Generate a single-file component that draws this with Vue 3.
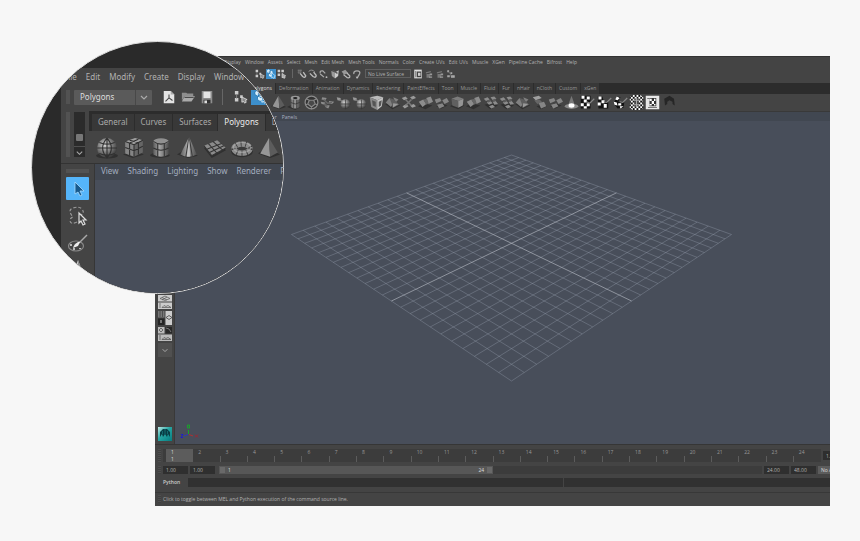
<script setup>
const menus = ['Display', 'Window', 'Assets', 'Select', 'Mesh', 'Edit Mesh', 'Mesh Tools', 'Normals', 'Color', 'Create UVs', 'Edit UVs', 'Muscle', 'XGen', 'Pipeline Cache', 'Bifrost', 'Help']
const snapIcons = ['magnet-grid', 'magnet-curve', 'magnet-point', 'magnet-cube', 'magnet-plane', 'magnet-live']
const renderIcons = ['clap', 'gear-box', 'gear-box', 'nodes']
const tabs = ['Polygons', 'Deformation', 'Animation', 'Dynamics', 'Rendering', 'PaintEffects', 'Toon', 'Muscle', 'Fluid', 'Fur', 'nHair', 'nCloth', 'Custom', 'xGen']
const shelf = ['pyramid', 'pipe', 'soccer', 'helix', 'bool', 'bool', 'glass-cube', 'facets', 'split', 'bridge', 'pieces', 'solid', 'bridge', 'mosaic', 'mosaic', 'facets', 'extrude', 'pieces', 'spot', 'check-a', 'check-b', 'check-c', 'check-full', 'check-box', 'hat']
const layouts = ['lay-two', 'lay-four', 'lay-three']
const frames = Array.from({ length: 24 }, (_, i) => i + 1)

const lensMenus = ['File', 'Edit', 'Modify', 'Create', 'Display', 'Window']
const lensTabs = ['General', 'Curves', 'Surfaces', 'Polygons', 'Deformation']
const lensShelf = ['sphere', 'cube', 'cylinder', 'cone', 'plane', 'torus', 'pyramid']
const lensPanel = ['View', 'Shading', 'Lighting', 'Show', 'Renderer', 'Panels']

// Ground plane in perspective: u and v run 0..1 from the far corner.
const N = 24
const AXIS = 13
function project(u, v) {
  const w = 1 - 0.2287 * (u + v)
  const x = 336.5 + (169.7 * (u - v)) / w
  const y = (155 + 25.87 * (u + v)) / w - 121
  return x.toFixed(1) + ' ' + y.toFixed(1)
}
const line = (i) => `M${project(i / N, 0)}L${project(i / N, 1)}M${project(0, i / N)}L${project(1, i / N)}`
const gridPath = Array.from({ length: N + 1 }, (_, i) => (i === AXIS ? '' : line(i))).join('')
const axisPath = line(AXIS)
</script>

<template>
  <main class="page">
    <svg class="defs" aria-hidden="true">
      <defs>
        <linearGradient id="metal" x1="0" x2="1"><stop offset="0" stop-color="#5c5c5c" /><stop offset=".4" stop-color="#a4a4a4" /><stop offset="1" stop-color="#4c4c4c" /></linearGradient>
        <radialGradient id="ball" cx=".4" cy=".35" r=".65"><stop offset="0" stop-color="#d6d6d6" /><stop offset=".5" stop-color="#858585" /><stop offset="1" stop-color="#3c3c3c" /></radialGradient>
        <linearGradient id="teal" x1="0" y1="0" x2="1" y2="1"><stop offset="0" stop-color="#bfe9e6" /><stop offset=".45" stop-color="#25a5a2" /><stop offset="1" stop-color="#067c80" /></linearGradient>
        <pattern id="check" width="5" height="5" patternUnits="userSpaceOnUse"><path fill="#111" d="M0 0h5v5H0z" /><path fill="#fff" d="M0 0h2.500v2.500H0zM2.500 2.500H5V5H2.500z" /></pattern>
      </defs>
      <symbol id="sphere" viewBox="0 0 20 20"><ellipse cx="10" cy="17" rx="10" ry="2.500" fill="#303030" /><circle cx="10" cy="10" r="9" fill="url(#ball)" /><path d="M10 1v18M1 10h18M3 5q7 3 14 0M3 15q7 3 14 0M10 1Q2 10 10 19M10 1q8 9 0 18" fill="none" stroke="#303030" /></symbol>
      <symbol id="cube" viewBox="0 0 20 20"><path fill="#303030" d="M0 16l9 3 10-3-9-4z" /><path fill="#a0a0a0" d="M2 4l9-3 7 2-8 4z" /><path fill="#858585" d="M2 4l8 3v11l-8-3z" /><path fill="#666" d="M10 7l8-4v11l-8 4z" /><path d="M6 5.500v11M14 5v11M2 9.500l8 3 8-4M6 3l8 2M6 5.500l8-3.500M2 4l8 3 8-4M10 7v11" fill="none" stroke="#303030" /></symbol>
      <symbol id="cylinder" viewBox="0 0 20 20"><ellipse cx="9" cy="16.500" rx="9" ry="2.500" fill="#303030" /><path fill="url(#metal)" d="M3 4v12q7 4 14 0V4z" /><ellipse cx="10" cy="4" rx="7" ry="2.800" fill="#909090" /><path d="M3 4q7 5 14 0M3 10q7 4 14 0M7 6v12M13 6v12" fill="none" stroke="#343434" /></symbol>
      <symbol id="cone" viewBox="0 0 20 20"><path fill="#303030" d="M0 16l8-5 11 6-9 2z" /><path fill="url(#metal)" d="M11 0L3 16q7 4 15 0z" /><path d="M11 0L8 18M11 0l3 18" fill="none" stroke="#3c3c3c" /><path fill="#ddd" d="M11 0L9 18h3z" opacity=".6" /></symbol>
      <symbol id="plane" viewBox="0 0 20 20"><path fill="#303030" d="M0 10l7 9 13-7-1-1z" /><path fill="#8a8a8a" d="M0 8l12-5 8 7-13 7z" /><path d="M3 11l13-5M5 14l13-6M4 6l8 9M8 4l9 8M0 8l7 9 13-7" fill="none" stroke="#333" /></symbol>
      <symbol id="torus" viewBox="0 0 20 20"><ellipse cx="10" cy="13" rx="10" ry="5.500" fill="#303030" /><ellipse cx="10" cy="10.500" rx="7.200" ry="4.200" fill="#3a3a3a" stroke="#8c8c8c" stroke-width="5" /><ellipse cx="10" cy="10.500" rx="7.200" ry="4.200" fill="none" stroke="#3b3b3b" stroke-width="5" stroke-dasharray=".8 3.500" /><ellipse cx="10" cy="9.500" rx="8" ry="4.500" fill="none" stroke="#ccc" opacity=".4" /></symbol>
      <symbol id="pyramid" viewBox="0 0 20 20"><path fill="#303030" d="M0 15l8-6 12 7-9 3z" /><path fill="#969696" d="M10 1L2 15l9 3z" /><path fill="#5c5c5c" d="M10 1l8 13-7 4z" /></symbol>
      <symbol id="pipe" viewBox="0 0 20 20"><path fill="#303030" d="M0 16l8-4 10 4-7 4z" /><path fill="url(#metal)" d="M5 4v12q6 4 12 0V4z" /><ellipse cx="11" cy="4" rx="6" ry="3" fill="#999" /><ellipse cx="11" cy="4" rx="3" ry="1.500" fill="#222" /><path d="M5 10q6 4 12 0M9 6v12M13 6v12" fill="none" stroke="#333" /></symbol>
      <symbol id="soccer" viewBox="0 0 20 20"><circle cx="10" cy="10" r="8.500" fill="#333" stroke="#8c8c8c" stroke-width="1.600" /><path d="M7 7h6l2 5-5 4-5-4zM7 7L3 5M13 7l4-2M15 12l3 1M5 12l-3 1M10 16v3" fill="#484848" stroke="#888" stroke-width="1.600" /></symbol>
      <symbol id="helix" viewBox="0 0 20 20"><path fill="#8d8d8d" d="M3 3l6 1-2 3-5-1zM1 9l6 1v3l-5-1zM8 13l5 1-2 4-4-2zM12 8l7 1-3 3-4-1z" /><path d="M5 6l5 5 6-1M5 12l5 3" fill="none" stroke="#666" stroke-width="2" /></symbol>
      <symbol id="bool" viewBox="0 0 20 20"><path fill="#999" d="M1 3l5 1 1 4-5-1z" /><path d="M5 6l4 3" stroke="#777" stroke-width="2" /><circle cx="12.500" cy="12" r="6.500" fill="url(#ball)" /><path d="M6 12h13M12.500 6v13" stroke="#333" fill="none" /></symbol>
      <symbol id="glass-cube" viewBox="0 0 20 20"><path fill="#bbb" d="M1 3l10-2 8 2-8 4z" /><path fill="#8a8a8a" d="M1 3l10 4v13L3 16z" /><path fill="#c4c4c4" d="M11 7l8-4-2 12-6 5z" /><path fill="#555" d="M4 7l5 2v7l-4-2zM13 9l4-2-1 7-3 2z" /></symbol>
      <symbol id="facets" viewBox="0 0 20 20"><path fill="#303030" d="M0 12l10 7 10-5-5-4z" /><path fill="#808080" d="M1 10l5-6 5 7-3 5zM11 3l7 3-4 4z" /><path fill="#5e5e5e" d="M6 4l6 2 7 7-8 4z" /><path fill="#999" d="M11 11l7 1-8 5z" /></symbol>
      <symbol id="split" viewBox="0 0 20 20"><path fill="#9a9a9a" d="M1 4l5-2 3 3-5 2zM12 3l5-2 3 3-5 2zM2 15l5-3 3 3-5 3zM12 14l5-2 3 3-5 2z" /><path d="M6 6l8 8M14 6l-8 8" stroke="#777" stroke-width="2" /></symbol>
      <symbol id="bridge" viewBox="0 0 20 20"><path fill="#303030" d="M0 15l7-4 12 3-9 5z" /><path fill="#8c8c8c" d="M1 9l6-3 4 6-5 4zM11 4l6-2 3 7-6 3z" /><path fill="#666" d="M7 6l5-1 2 6-3 2z" /></symbol>
      <symbol id="pieces" viewBox="0 0 20 20"><path fill="#303030" d="M3 15l6-4 9 3-8 4z" /><path fill="#858585" d="M1 6l7-2 2 4-7 3zM11 7l6-3 3 5-6 3zM4 13l7-2 3 4-7 3z" /></symbol>
      <symbol id="solid" viewBox="0 0 20 20"><path fill="#303030" d="M0 15l8-5 11 4-8 5z" /><path fill="#7c7c7c" d="M2 5l8-3 8 3-7 3z" /><path fill="#606060" d="M2 5l9 3v9l-8-3z" /><path fill="#959595" d="M11 8l7-3-1 9-6 3z" /></symbol>
      <symbol id="mosaic" viewBox="0 0 20 20"><path fill="#303030" d="M2 13l8 6 10-5-8-4z" /><path fill="#8c8c8c" d="M1 5l5-2 3 3-5 2zM10 3l5-1 3 3-5 2zM5 10l5-2 3 3-5 2zM13 9l4-1 3 4-5 1zM8 15l5-2 3 3-5 2z" /><path fill="#5c5c5c" d="M5 8l4-2 2 2-4 2zM13 6l4-1v3l-4 1z" /></symbol>
      <symbol id="extrude" viewBox="0 0 20 20"><path fill="#303030" d="M6 15l8-3 6 3-8 4z" /><path fill="#a0a0a0" d="M1 3l8-2 4 3-8 3z" /><path fill="#666" d="M3 7l7-1 4 4-7 2z" /><path fill="#858585" d="M9 11l7-2 3 6-7 3z" /></symbol>
      <symbol id="spot" viewBox="0 0 20 20"><ellipse cx="10" cy="15" rx="9" ry="3.500" fill="#8a8a8a" /><path fill="#777" d="M10 1L5 15h10z" /><ellipse cx="10" cy="14" rx="4" ry="3" fill="#fff" /></symbol>
      <symbol id="check-a" viewBox="0 0 20 20"><path fill="#111" d="M1 1h13v17H1z" /><path fill="#fff" d="M2 1h4v4H2zM9 2h4v4H9zM5 6h4v4H5zM1 11h4v4H1zM9 11h4v4H9zM5 15h4v3H5z" /><path d="M9 9l4 2 6-6" fill="none" stroke="#888" stroke-width="1.500" /></symbol>
      <symbol id="check-b" viewBox="0 0 20 20"><path fill="#111" d="M1 2h6l2 6 6 2v8H2z" /><path fill="#fff" d="M2 2h4v4H2zM1 10h4v4H1zM6 7h4v4H6zM9 12h4v5H9z" /><path d="M9 9l4 1 6-6" fill="none" stroke="#888" stroke-width="1.500" /></symbol>
      <symbol id="check-c" viewBox="0 0 20 20"><path fill="#111" d="M5 2l5 1-3 6 8 1-1 7-8 1-5-7z" /><path fill="#fff" d="M5 2l4 2-3 3-3-1zM1 9l4 1 1 4-4-1zM7 11h4v3H7zM9 15h5l-4 3z" /><path d="M9 9l4 1 6-6" fill="none" stroke="#888" stroke-width="1.500" /></symbol>
      <symbol id="check-full" viewBox="0 0 20 20"><path fill="url(#check)" d="M1 3l4-3h10l4 3v4l-2 3 2 3v4l-4 3H5l-4-3v-4l2-3-2-3z" /><path fill="#444" d="M7 5h6v10H7z" /><path d="M10 3v14M5 7h10M5 13h10" stroke="#aaa" stroke-width="1.500" /></symbol>
      <symbol id="check-box" viewBox="0 0 20 20"><path fill="#e8e8e8" d="M1 1h18v18H1z" /><path fill="#555" d="M4 16h12v1H4zM3 4h3v1H3z" /><path fill="#333" d="M6 4h9v11H6z" /><path fill="#fff" d="M6 5h3v3H6zM12 5h2v3h-2zM9 8h3v4H9zM6 12h3v2H6zM12 12h2v2h-2z" /></symbol>
      <symbol id="hat" viewBox="0 0 20 20"><path fill="#262626" d="M3 5l7-4 6 4 1 9-3-2v-3l-4-2-3 2v3l-3 2z" /></symbol>
      <symbol id="new" viewBox="0 0 16 16"><path fill="#e4e4e4" d="M2 1h8l4 4v10H2z" /><path fill="#aaa" d="M10 1l4 4h-4z" /><path d="M8 5v4l-4 4M8 9l4 3" fill="none" stroke="#444" stroke-width="1.200" /></symbol>
      <symbol id="open" viewBox="0 0 16 16"><path fill="#8e8e8e" d="M1 3h5l1 1h7v3H4l-3 5z" /><path fill="#aaa" d="M4 7h12l-4 6H1z" /><path fill="#4a4a4a" d="M4 8h11l-1 1H4z" /></symbol>
      <symbol id="save" viewBox="0 0 16 16"><path fill="#8e8e8e" d="M2 1h12v14H2z" /><path fill="#e6e6e6" d="M4 2h8v7H4z" /><path fill="#333" d="M4 11h8v4H4z" /><path fill="#ddd" d="M5 12h3v3H5z" /></symbol>
      <symbol id="hier" viewBox="0 0 16 16"><path fill="#ccc" d="M1 1h4v4H1zM1 9h4v4H1zM7 6h3v3H7z" /><path d="M3 5v5" stroke="#888" /><path fill="#888" stroke="#ddd" d="M9 8v6l2-1 1 2 2-1-1-2 2-1z" /></symbol>
      <symbol id="object" viewBox="0 0 16 16"><path fill="#d8f0ff" stroke="#176aa6" stroke-width=".8" d="M1 2l3-2 3 2v3L4 7 1 5zM5 4l3-2 3 2v3L8 9 5 7zM4 8l3-2 3 2v3l-3 2-3-2z" /><path fill="#2b95dc" stroke="#e6f6ff" d="M9 6v8l2-1 1 2 2-1-1-2 2-1z" /></symbol>
      <symbol id="component" viewBox="0 0 16 16"><path fill="#ccc" d="M1 1h4v4H1zM7 1h4v4H7zM1 7h4v4H1z" /><path fill="#aaa" stroke="#ddd" d="M8 7v7l2-1 1 2 2-1-1-2 2-1z" /></symbol>
      <symbol id="magnet-grid" viewBox="0 0 16 16"><path d="M1 2h7M1 5h6M3 1v7M6 1v5" stroke="#888" /><path d="M5 7l4 5q4 3 5-1L10 5" fill="none" stroke="#bbb" stroke-width="2.200" /></symbol>
      <symbol id="magnet-curve" viewBox="0 0 16 16"><path d="M1 4q5-5 10 1" fill="none" stroke="#999" stroke-width="1.500" /><path d="M3 7l5 5q5 3 5-2L9 5" fill="none" stroke="#bbb" stroke-width="2.200" /></symbol>
      <symbol id="magnet-point" viewBox="0 0 16 16"><path d="M2 8l6 5M2 7q-1-5 4-4l4 4" fill="none" stroke="#aaa" stroke-width="2" /><circle cx="12" cy="13" r="1.500" fill="#bbb" /></symbol>
      <symbol id="magnet-cube" viewBox="0 0 16 16"><path fill="#999" d="M2 3l6 2v10l-5-4z" /><path fill="#ccc" d="M8 5l6-3-1 9-5 4z" /><path d="M4 2l8 5" stroke="#555" stroke-width="2" /></symbol>
      <symbol id="magnet-plane" viewBox="0 0 16 16"><path fill="#999" d="M1 4l6-3 4 5-6 3z" /><path d="M4 9l6 5q5 1 4-3L9 6" fill="none" stroke="#bbb" stroke-width="2" /></symbol>
      <symbol id="magnet-live" viewBox="0 0 16 16"><path d="M3 8q-1-5 5-5t4 5l-3 5" fill="none" stroke="#aaa" stroke-width="2.200" /><path fill="#ccc" d="M6 12l4 1-2 3z" /></symbol>
      <symbol id="clap" viewBox="0 0 16 16"><path fill="#ddd" d="M2 1h12v14H2z" /><path fill="#444" d="M4 3h1v10H4zM6 4h7v9H6z" /><path fill="#ccc" d="M8 6h4v5H8z" /></symbol>
      <symbol id="gear-box" viewBox="0 0 16 16"><path fill="#777" d="M3 5l8-2v2L3 7zM4 8h6v6H4z" /><path fill="#999" d="M9 7h4v3H9zM8 12h5v2H8z" /></symbol>
      <symbol id="nodes" viewBox="0 0 16 16"><path fill="#aaa" d="M2 2h3v3H2zM7 5h3v3H7zM2 10h4v3H2zM8 10h6v4H8z" /><path d="M4 4l6 8M4 11h5" stroke="#888" /></symbol>
      <symbol id="lay-two" viewBox="0 0 14 14"><path fill="#ccc" d="M0 0h14v6.500H0zM0 7.500h14V14H0z" /><path d="M2 3.500l5-2.500 5 2.500-5 2zM4 2.500l5 2.500M9 2L4 5M4 12.500l2-2 2 1 2-1 3 2zM2 8v5" fill="none" stroke="#555" stroke-width=".7" /></symbol>
      <symbol id="lay-four" viewBox="0 0 14 14"><path fill="#252525" d="M0 7.500h6.500V14H0z" /><path fill="#777" d="M0 0h6.500v6.500H0z" /><path fill="#ccc" d="M7.500 0H14v14H7.500z" /><path d="M2 0v6M4.500 0v6M8 6.500l3-2 3 2-3 2z" fill="none" stroke="#444" stroke-width=".8" /><path d="M2 9h2v3H2z" fill="#777" /></symbol>
      <symbol id="lay-three" viewBox="0 0 14 14"><path fill="#bbb" d="M0 0h6.500v6.500H0zM0 7.500h14V14H0z" /><path fill="#282828" d="M7.500 0H14v6.500H7.500z" /><path d="M1 3l2-2 2 2-2 2zM4 12.500l2-2 2 1 2-1 3 2zM2 8v5" fill="none" stroke="#555" stroke-width=".8" /><path d="M8 1l3 1 2 3" fill="none" stroke="#777" /></symbol>
      <symbol id="chevron" viewBox="0 0 10 10"><path d="M2 4l3 3 3-3" fill="none" stroke="#aaa" stroke-width="1.200" /></symbol>
      <symbol id="maya" viewBox="0 0 14 14"><path fill="url(#teal)" d="M0 0h14v14H0z" /><path fill="#093e45" d="M2 10V5l3-3h4l3 3v5l-2-3-1 3-2-3-2 3-1-3z" /><path d="M7 2v5M4.500 4v3M9.500 4v3" stroke="#17777c" stroke-width=".8" /></symbol>
      <symbol id="pointer" viewBox="0 0 16 16"><path fill="#175a8e" stroke="#a9dcff" stroke-width=".8" d="M5 1v12l3-2 2 4 2-1-2-4h4z" /></symbol>
      <symbol id="lasso" viewBox="0 0 20 20"><path d="M9 16q-6 3-7-1 0-3 3-4Q-1 4 5 2t9 1q3 4-1 6" fill="none" stroke="#999" stroke-width="1.200" stroke-dasharray="3 2" /><path fill="#444" stroke="#ddd" stroke-width="1.200" d="M11 7v10l2-2 2 4 2-1-2-4h3z" /></symbol>
      <symbol id="brush" viewBox="0 0 20 20"><ellipse cx="8" cy="13" rx="7.500" ry="5" fill="none" stroke="#888" stroke-width="1.200" /><path d="M19 2l-8 8" stroke="#aaa" stroke-width="1.500" /><path fill="#eee" d="M12 9l-2 4-5 2q1-4 5-6z" /><path fill="#bbb" d="M2 11h2v2H2zM5 15h2v2H5zM11 15h2v1h-2z" /></symbol>
      <symbol id="move" viewBox="0 0 20 20"><path fill="#ccc" d="M10 0l5 13H5z" /><path fill="#888" d="M10 0l5 13h-5z" /></symbol>
    </svg>

    <section class="app">
      <nav class="menubar">
        <a v-for="m in menus" :key="m" href="#">{{ m }}</a>
      </nav>

      <div class="status">
        <button class="ico" aria-label="Hierarchy"><svg><use href="#hier" /></svg></button>
        <button class="ico on" aria-label="Object"><svg><use href="#object" /></svg></button>
        <button class="ico" aria-label="Component"><svg><use href="#component" /></svg></button>
        <span class="sep"></span>
        <button v-for="s in snapIcons" :key="s" class="ico" :aria-label="s"><svg><use :href="'#' + s" /></svg></button>
        <input class="live" aria-label="Live surface" value="No Live Surface" />
        <button v-for="(s, i) in renderIcons" :key="i" class="ico" :aria-label="s"><svg><use :href="'#' + s" /></svg></button>
      </div>

      <div class="tabs">
        <button v-for="(t, i) in tabs" :key="t" :class="{ active: i === 0 }">{{ t }}</button>
      </div>
      <div class="shelf">
        <button v-for="(s, i) in shelf" :key="i" :aria-label="s"><svg><use :href="'#' + s" /></svg></button>
      </div>

      <div class="work">
        <aside class="tools">
          <button v-for="l in layouts" :key="l" :aria-label="l"><svg><use :href="'#' + l" /></svg></button>
          <button class="more" aria-label="More layouts"><svg><use href="#chevron" /></svg></button>
          <svg class="logo"><use href="#maya" /></svg>
        </aside>
        <div class="view">
          <nav class="panelbar"><a href="#">Renderer</a><a href="#">Panels</a></nav>
          <div class="scene">
            <svg width="655" height="322" viewBox="0 0 655 322">
              <path :d="gridPath" fill="none" stroke="#a3abbb" stroke-opacity=".32" />
              <path :d="axisPath" fill="none" stroke="#b4b9c2" stroke-opacity=".65" />
              <g fill="none">
                <path d="M13.500 313v-4" stroke="#18a32b" />
                <path d="M12.500 304h2v3h-2z" stroke="#18a32b" />
                <path d="M13 313.500l-4 1.500" stroke="#2835c8" /><path d="M6 313.500h2l-2 3h2" stroke="#2020c8" />
                <path d="M14 313.500l4 1.500" stroke="#b03030" /><path d="M20 313.500l3 3M23 313.500l-3 3" stroke="#9c2733" />
              </g>
            </svg>
          </div>
        </div>
      </div>

      <footer class="bottom">
        <div class="row">
          <i class="grip"></i>
          <div class="timeline">
            <span v-for="f in frames" :key="f" :class="{ now: f === 1 }">{{ f }}<b v-if="f === 1">1</b></span>
          </div>
          <input class="current" aria-label="Current time" value="1.00" />
        </div>
        <div class="row range">
          <i class="grip"></i>
          <input class="num" aria-label="Animation start" value="1.00" />
          <input class="num" aria-label="Playback start" value="1.00" />
          <div class="track">
            <div class="span"><button aria-label="Range start"></button><span>1</span><span class="end">24</span><button aria-label="Range end"></button></div>
          </div>
          <input class="num" aria-label="Playback end" value="24.00" />
          <input class="num" aria-label="Animation end" value="48.00" />
          <button class="layer">No Anim</button>
        </div>
        <div class="row command">
          <label for="cmd">Python</label>
          <input id="cmd" class="cmd" />
          <output class="result"></output>
        </div>
        <div class="help"><i class="grip"></i><span>Click to toggle between MEL and Python execution of the command source line.</span></div>
      </footer>
    </section>

    <section class="lens">
      <div class="zoomed">
        <nav class="z-menu"><a v-for="m in lensMenus" :key="m" href="#">{{ m }}</a></nav>
        <div class="z-status">
          <i class="z-grip"></i>
          <div class="z-select">
            <select aria-label="Menu set"><option>Polygons</option></select>
            <svg><use href="#chevron" /></svg>
          </div>
          <button aria-label="New"><svg><use href="#new" /></svg></button>
          <button aria-label="Open"><svg><use href="#open" /></svg></button>
          <button aria-label="Save"><svg><use href="#save" /></svg></button>
          <span class="z-sep"></span>
          <button aria-label="Select hierarchy"><svg><use href="#hier" /></svg></button>
          <button class="on" aria-label="Select object"><svg><use href="#object" /></svg></button>
        </div>
        <div class="z-shelf">
          <i class="z-grip"></i>
          <div class="z-scroll"><span></span><button aria-label="Shelf menu"><svg><use href="#chevron" /></svg></button></div>
          <div class="z-main">
            <div class="z-tabs"><button v-for="t in lensTabs" :key="t" :class="{ active: t === 'Polygons' }">{{ t }}</button></div>
            <div class="z-icons"><button v-for="s in lensShelf" :key="s" :aria-label="s"><svg><use :href="'#' + s" /></svg></button></div>
          </div>
        </div>
        <div class="z-work">
          <aside class="z-tools">
            <i class="z-grip wide"></i>
            <button class="on" aria-label="Select"><svg><use href="#pointer" /></svg></button>
            <button aria-label="Lasso"><svg><use href="#lasso" /></svg></button>
            <button aria-label="Paint select"><svg><use href="#brush" /></svg></button>
            <button aria-label="Move"><svg><use href="#move" /></svg></button>
          </aside>
          <nav class="z-panel"><a v-for="m in lensPanel" :key="m" href="#">{{ m }}</a></nav>
        </div>
      </div>
    </section>
  </main>
</template>

<style>
body { background: #f7f7f7; }
</style>

<style scoped>
.page {
  position: relative;
  box-sizing: border-box;
  min-height: 100vh;
  padding: 56px 30px 35px 155px;
  display: flex;
  font: 5px/8px "Open Sans", "Noto Sans", sans-serif;
  color: #b2b2b2;
  overflow: hidden;
}
.page *, .page *::before { box-sizing: border-box; }
.defs { position: absolute; width: 0; height: 0; }
a { color: inherit; text-decoration: none; white-space: nowrap; }
button, input, select { font: inherit; color: inherit; border: 0; padding: 0; margin: 0; background: none; border-radius: 0; min-width: 0; }
button { display: flex; align-items: center; justify-content: center; flex: none; white-space: nowrap; }
svg { display: block; flex: none; }

.app { flex: 1; min-width: 0; display: flex; flex-direction: column; background: #444; overflow: hidden; }
.menubar { display: flex; align-items: center; gap: 4px; height: 12px; padding: 0 0 2px 69px; border-top: 1px solid #333; }
.status { display: flex; align-items: center; height: 15px; gap: 1px; padding: 0 0 4px 100px; }
.ico { width: 10px; height: 10px; }
.ico svg { width: 10px; height: 10px; }
.on { background: #3d8fcb; }
.sep { width: 1px; height: 9px; margin: 0 3px 0 4px; background: #666; }
.live { width: 46px; height: 9px; margin: 0 1px 0 2px; padding: 0 2px; border: 1px solid #606060; line-height: 7px; }
.tabs { display: flex; gap: 1px; height: 11px; padding-left: 93px; background: #2c2c2c; }
.tabs button { padding: 0 3px 1px; background: #383838; color: #999; }
.tabs .active { background: #444; color: #ddd; }
.shelf { display: flex; justify-content: space-between; align-items: center; width: 406px; height: 17px; margin-left: 116px; }
.shelf svg { width: 15px; height: 15px; }

.work { flex: 1; display: flex; border-top: 1px solid #393939; }
.tools { width: 20px; padding: 183px 3px 3px; display: flex; flex-direction: column; align-items: center; gap: 2px; border-right: 1px solid #393939; }
.tools svg { width: 14px; height: 14px; }
.tools .more { width: 14px; height: 14px; background: #505050; }
.tools .more svg { width: 8px; height: 8px; }
.tools .logo { margin-top: auto; }
.view { flex: 1; min-width: 0; display: flex; flex-direction: column; background: #484e5a; }
.panelbar { display: flex; align-items: center; gap: 5px; height: 9px; padding-left: 80px; background: #414751; color: #a9b1c0; }
.scene { flex: 1; overflow: hidden; }

.bottom { border-top: 1px solid #363636; padding-top: 4px; }
.row { display: flex; align-items: stretch; height: 13px; }
.grip { flex: none; width: 3px; margin: 0 2px 0 3px; background: repeating-linear-gradient(#555 0 1px, #3d3d3d 1px 2px); opacity: .6; }
.timeline { flex: 1; display: flex; background: #3c3c3c; padding-left: 3px; }
.timeline span { flex: 1; padding-left: 5px; line-height: 7px; color: #999; background: linear-gradient(#5c5c5c, #5c5c5c) right bottom / 1px 6px no-repeat; }
.timeline span:last-child { background: none; }
.timeline .now { background: #5c5c5c; color: #ddd; }
.timeline b { display: block; line-height: 6px; font-weight: 400; }
.current { flex: none; width: 7px; height: 9px; margin: 2px 0 0 2px; padding-left: 3px; background: #2e2e2e; }
.range { height: 8px; margin-top: 4px; gap: 2px; }
.range .grip { margin-right: 0; }
.num { flex: none; width: 25px; background: #2f2f2f; padding-left: 3px; }
.track { flex: 1; margin: 0 0 0 2px; background: #3c3c3c; }
.span { display: flex; align-items: center; justify-content: space-between; gap: 3px; width: 50.5%; height: 8px; padding: 0 1px; background: #575757; color: #ddd; }
.span button { width: 5px; height: 6px; background: #696969; }
.span .end { margin-left: auto; }
.layer { justify-content: flex-start; width: 12px; padding-left: 3px; background: #5c5c5c; color: #ddd; overflow: hidden; }
.command { height: 9px; margin-top: 4px; gap: 1px; }
.command label { width: 32px; padding-left: 8px; color: #ccc; font-weight: 600; line-height: 9px; }
.cmd { flex: 375; background: #313131; }
.result { flex: 266; background: #313131; }
.help { display: flex; height: 14px; margin-top: 5px; padding: 2px 0 3px; border-top: 1px solid #383838; }

.lens {
  position: absolute;
  left: 31px;
  top: 41px;
  width: 253px;
  height: 253px;
  border-radius: 50%;
  border: 1px solid #dcdcdc;
  background: #2a2a2a;
  overflow: hidden;
  font: 8px/12px "Noto Sans", "Open Sans", sans-serif;
}
.zoomed { width: 300px; min-height: 100%; margin: 26px 0 0 29px; background: #444; }
.z-menu { display: flex; align-items: center; gap: 9px; height: 18px; padding-left: 3px; }
.z-status { display: flex; align-items: center; height: 24px; padding: 0 0 2px 5px; }
.z-grip { flex: none; width: 4px; height: 14px; background: radial-gradient(#686868 1px, transparent 1px) 0 0 / 2px 2px; opacity: .4; }
.z-select { display: flex; align-items: center; width: 78px; height: 15px; margin: 0 7px 0 4px; background: #5a5a5a; border-radius: 1px; }
.z-select select { appearance: none; flex: 1; height: 15px; padding-left: 6px; border-right: 1px solid #484848; color: #ddd; }
.z-select svg { width: 10px; height: 10px; margin: 0 3px; }
.z-status button { width: 19px; height: 15px; }
.z-status button svg { width: 14px; height: 14px; }
.z-sep { width: 1px; height: 16px; margin: 0 8px 0 6px; background: #666; }
.z-status .on { margin-left: 1px; }
.z-shelf { display: flex; height: 54px; padding: 1px 0 0 5px; border-bottom: 1px solid #333; }
.z-shelf .z-grip { height: 45px; margin-top: 1px; }
.z-scroll { display: flex; flex-direction: column; justify-content: space-between; align-items: center; width: 11px; height: 45px; margin: 1px 4px 0 4px; background: #2b2b2b; }
.z-scroll span { width: 7px; height: 7px; margin-top: 22px; background: #777; border-radius: 1px; }
.z-scroll button { width: 11px; height: 11px; border-top: 1px solid #505050; }
.z-scroll svg { width: 9px; height: 9px; }
.z-main { flex: 1; }
.z-tabs { display: flex; gap: 1px; height: 20px; padding: 3px 0 0 3px; background: #2c2c2c; }
.z-tabs button { padding: 0 6px 2px; background: #383838; color: #aaa; }
.z-tabs .active { background: #444; color: #eee; }
.z-icons { display: flex; gap: 5px; padding: 6px 0 0 7px; }
.z-icons svg { width: 22px; height: 22px; }
.z-work { display: flex; height: 130px; }
.z-tools { width: 34px; padding: 5px 5px 0; display: flex; flex-direction: column; align-items: center; gap: 4px; border-right: 1px solid #363636; }
.z-tools .wide { width: 23px; height: 4px; }
.z-tools button { width: 23px; height: 23px; }
.z-tools .on { background: #55b5fa; border-radius: 1px; }
.z-tools svg { width: 20px; height: 20px; }
.z-tools .on svg { width: 16px; height: 16px; }
.z-panel { flex: 1; display: flex; align-items: flex-start; gap: 9px; padding: 1px 0 0 6px; color: #a3adbf; background: linear-gradient(#414751 16px, #484e5a 16px); }
</style>
